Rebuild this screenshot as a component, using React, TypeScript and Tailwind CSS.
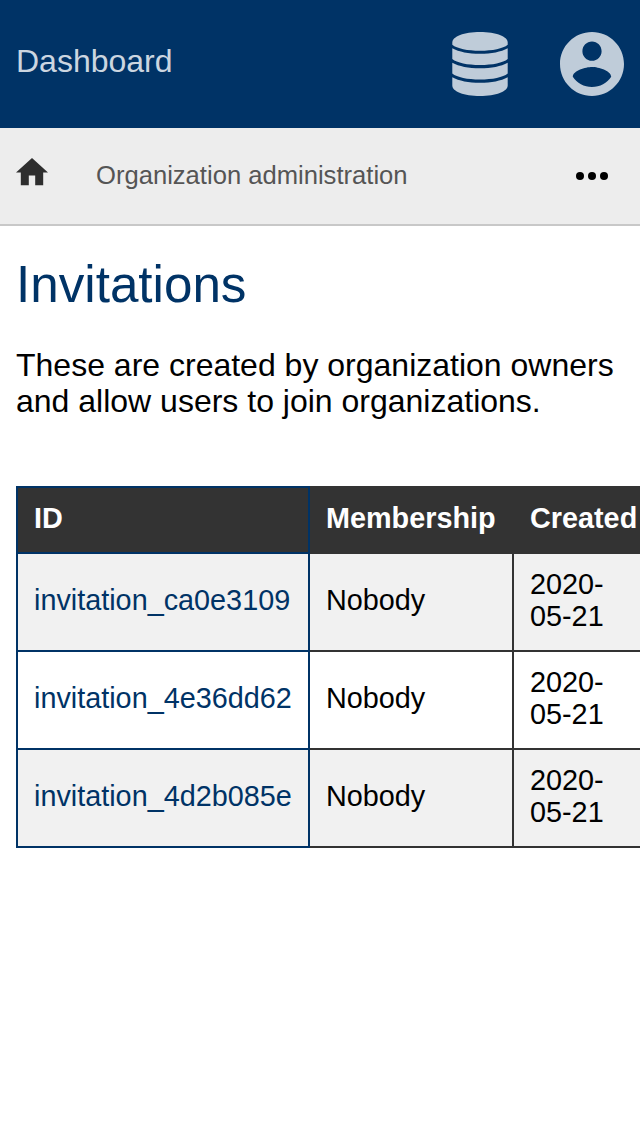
const invitations = [
  { id: 'invitation_ca0e3109', membership: 'Nobody', created: '2020-05-21' },
  { id: 'invitation_4e36dd62', membership: 'Nobody', created: '2020-05-21' },
  { id: 'invitation_4d2b085e', membership: 'Nobody', created: '2020-05-21' },
];

function DatabaseIcon() {
  return (
    <svg className="h-16 w-14" viewBox="0 0 56 64" fill="currentColor" aria-hidden="true">
      <path d="M.3 10.5C.3 4.5 12 0 28 0s27.7 4.5 27.7 10.5v2.2C51 16.600 40.500 18.700 28 18.700S5 16.600.3 12.700z" />
      <path d="M.3 16.200C7 19.800 16.500 21.800 28 21.800s21-2 27.700-5.600v10.900C51 31 40.500 33.100 28 33.100S5 31 .3 27.100z" />
      <path d="M.3 30.700C7 34.300 16.500 36.300 28 36.300s21-2 27.700-5.600v10.900C51 45.500 40.500 47.600 28 47.600S5 45.500.3 41.600z" />
      <path d="M.3 45.200C7 48.800 16.500 50.800 28 50.800s21-2 27.700-5.600v8.300C55.700 59.500 44 64 28 64S.3 59.500.3 53.500z" />
    </svg>
  );
}

function AccountIcon() {
  return (
    <svg className="size-16" viewBox="2 2 20 20" fill="currentColor" aria-hidden="true">
      <path d="M12 2C6.48 2 2 6.48 2 12s4.48 10 10 10 10-4.48 10-10S17.52 2 12 2zm0 3c1.66 0 3 1.34 3 3s-1.34 3-3 3-3-1.34-3-3 1.34-3 3-3zm0 14.2c-2.5 0-4.71-1.28-6-3.22.03-1.99 4-3.08 6-3.08 1.99 0 5.97 1.09 6 3.08-1.29 1.94-3.5 3.22-6 3.22z" />
    </svg>
  );
}

function Header() {
  return (
    <header className="flex h-32 items-center bg-[#003366] px-4 text-[#bfccd9]">
      <a className="mb-1.5 flex-1 text-[32px] leading-9 text-[#ccd6e0]">Dashboard</a>
      <div className="flex w-[172px] items-center justify-between">
        <DatabaseIcon />
        <AccountIcon />
      </div>
    </header>
  );
}

function Breadcrumbs() {
  return (
    <nav className="flex h-[98px] items-center border-b-2 border-[#c8c8c8] bg-[#ededed] pr-8 pl-4">
      <svg className="mb-2 h-[27.2px] w-8 text-[#2e2e2e]" viewBox="2 3 20 17" fill="currentColor" aria-hidden="true">
        <path d="M10 20v-6h4v6h5v-8h3L12 3 2 12h3v8z" />
      </svg>
      <span className="mb-0.5 ml-12 flex-1 text-[25.6px] leading-8 text-[#555555]">Organization administration</span>
      <svg className="h-2 w-8" viewBox="0 0 32 8" aria-hidden="true">
        <circle cx="4" cy="4" r="4" />
        <circle cx="16" cy="4" r="4" />
        <circle cx="28" cy="4" r="4" />
      </svg>
    </nav>
  );
}

function InvitationTable() {
  return (
    <table className="w-[660px] table-fixed border-separate border-spacing-0 text-left text-[28.8px] leading-8">
      <colgroup>
        <col className="w-[294px]" />
        <col className="w-[204px]" />
        <col className="w-[162px]" />
      </colgroup>
      <thead>
        <tr className="h-[68px] bg-[#333333] text-white">
          <th className="border-2 border-[#003366] p-0 pb-1 pl-4">ID</th>
          <th className="p-0 pb-1 pl-4">Membership</th>
          <th className="p-0 pb-1 pl-4">Created</th>
        </tr>
      </thead>
      <tbody>
        {invitations.map((invitation) => (
          <tr key={invitation.id} className="h-[98px] odd:bg-[#f1f1f1]">
            <td className="border-x-2 border-b-2 border-[#003366] p-0 pb-1 pl-4 text-[#003366]">{invitation.id}</td>
            <td className="border-r-2 border-b-2 border-[#333333] p-0 pb-1 pl-4">{invitation.membership}</td>
            <td className="border-b-2 border-[#333333] p-0 pr-14 pb-1 pl-4">{invitation.created}</td>
          </tr>
        ))}
      </tbody>
    </table>
  );
}

export default function App() {
  return (
    <div className="min-h-screen overflow-hidden bg-white font-['Liberation_Sans',Arial,sans-serif] text-black">
      <Header />
      <Breadcrumbs />
      <main className="pt-[29px] pl-4">
        <h1 className="text-[51.2px] leading-[60px] text-[#003366]">Invitations</h1>
        <p className="mt-8 mb-[67px] text-[32px] leading-9">
          These are created by organization owners and allow users to join organizations.
        </p>
        <InvitationTable />
      </main>
    </div>
  );
}
